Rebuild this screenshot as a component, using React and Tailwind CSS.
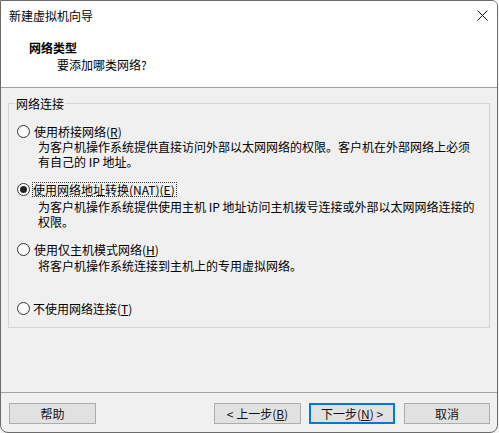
import React from "react";

const font = { fontFamily: '"Noto Sans CJK SC", "Noto Sans", sans-serif' };

// single radio circle, checked shows the dark dot
function Radio({ checked }) {
  return (
    <span className="w-[13px] h-[13px] rounded-full border border-[#333] bg-white flex items-center justify-center shrink-0">
      {checked && <span className="w-[7px] h-[7px] rounded-full bg-[#222]" />}
    </span>
  );
}

function Label({ text, mnemonic }) {
  return (
    <>
      {text}(<span className="underline underline-offset-1">{mnemonic}</span>)
    </>
  );
}

function Button({ children, primary, className = "" }) {
  return (
    <button
      className={`h-[21px] flex items-center justify-center text-[12px] text-[#111] bg-[#e1e1e1] ${
        primary ? "border-2 border-[#0078d7]" : "border border-[#adadad]"
      } ${className}`}
    >
      {children}
    </button>
  );
}

export default function App() {
  return (
    <div className="w-[499px] h-[433px] bg-white" style={font}>
      <div className="w-[498px] h-[433px] border border-[#6b6b6b] rounded-b-[8px] rounded-tr-[6px] overflow-hidden bg-[#f0f0f0] shadow-md flex flex-col">
        {/* header */}
        <div className="h-[87px] bg-white border-b border-[#a0a0a0] shrink-0">
          <div className="h-[29px] flex items-center justify-between pl-[8px] pr-[9px] text-[12px] leading-[15px] text-black">
            <span>新建虚拟机向导</span>
            <svg width="11" height="11" viewBox="0 0 11 11" className="mt-[-1px]">
              <path d="M0.5 0.5 L10.5 10.5 M10.5 0.5 L0.5 10.5" stroke="#111" strokeWidth="1" />
            </svg>
          </div>
          <div className="pl-[28px] pt-[10px] text-[12px] leading-[15px] font-bold text-black">网络类型</div>
          <div className="pl-[56px] pt-[2px] text-[12px] leading-[15px] text-black">要添加哪类网络?</div>
        </div>

        {/* body */}
        <div className="h-[304px] shrink-0 px-[7px] pt-[8px]">
          <fieldset className="h-[232px] w-[482px] border border-[#d5d5d5] px-[8px] pt-[13px] text-[12px] leading-[15px] text-black">
            <legend className="ml-[-2px] px-[1px] leading-[15px]">网络连接</legend>

            <div className="flex items-center gap-[4px]">
              <Radio />
              <span><Label text="使用桥接网络" mnemonic="R" /></span>
            </div>
            <div className="pl-[21px]">为客户机操作系统提供直接访问外部以太网网络的权限。客户机在外部网络上必须</div>
            <div className="pl-[21px]">有自己的 IP 地址。</div>

            <div className="flex items-center gap-[2px] mt-[13px]">
              <Radio checked />
              <span className="border border-dotted border-[#333] leading-[13px] pr-[1px]">
                <Label text="使用网络地址转换(NAT)" mnemonic="E" />
              </span>
            </div>
            <div className="pl-[21px] mt-[2px]">为客户机操作系统提供使用主机 IP 地址访问主机拨号连接或外部以太网网络连接的</div>
            <div className="pl-[21px]">权限。</div>

            <div className="flex items-center gap-[4px] mt-[13px]">
              <Radio />
              <span><Label text="使用仅主机模式网络" mnemonic="H" /></span>
            </div>
            <div className="pl-[21px] mt-[1px]">将客户机操作系统连接到主机上的专用虚拟网络。</div>

            <div className="flex items-center gap-[3px] mt-[28px]">
              <Radio />
              <span><Label text="不使用网络连接" mnemonic="T" /></span>
            </div>
          </fieldset>
        </div>

        {/* footer */}
        <div className="border-t border-[#a0a0a0] flex-1 pt-[10px] pl-[8px] pr-[7px] flex">
          <Button className="w-[87px]">帮助</Button>
          <div className="ml-auto flex gap-[8px]">
            <Button className="w-[87px]">&lt; 上一步(<span className="underline">B</span>)</Button>
            <Button primary className="w-[86px]">下一步(<span className="underline">N</span>) &gt;</Button>
            <Button className="w-[86px] ml-[1px]">取消</Button>
          </div>
        </div>
      </div>
    </div>
  );
}
